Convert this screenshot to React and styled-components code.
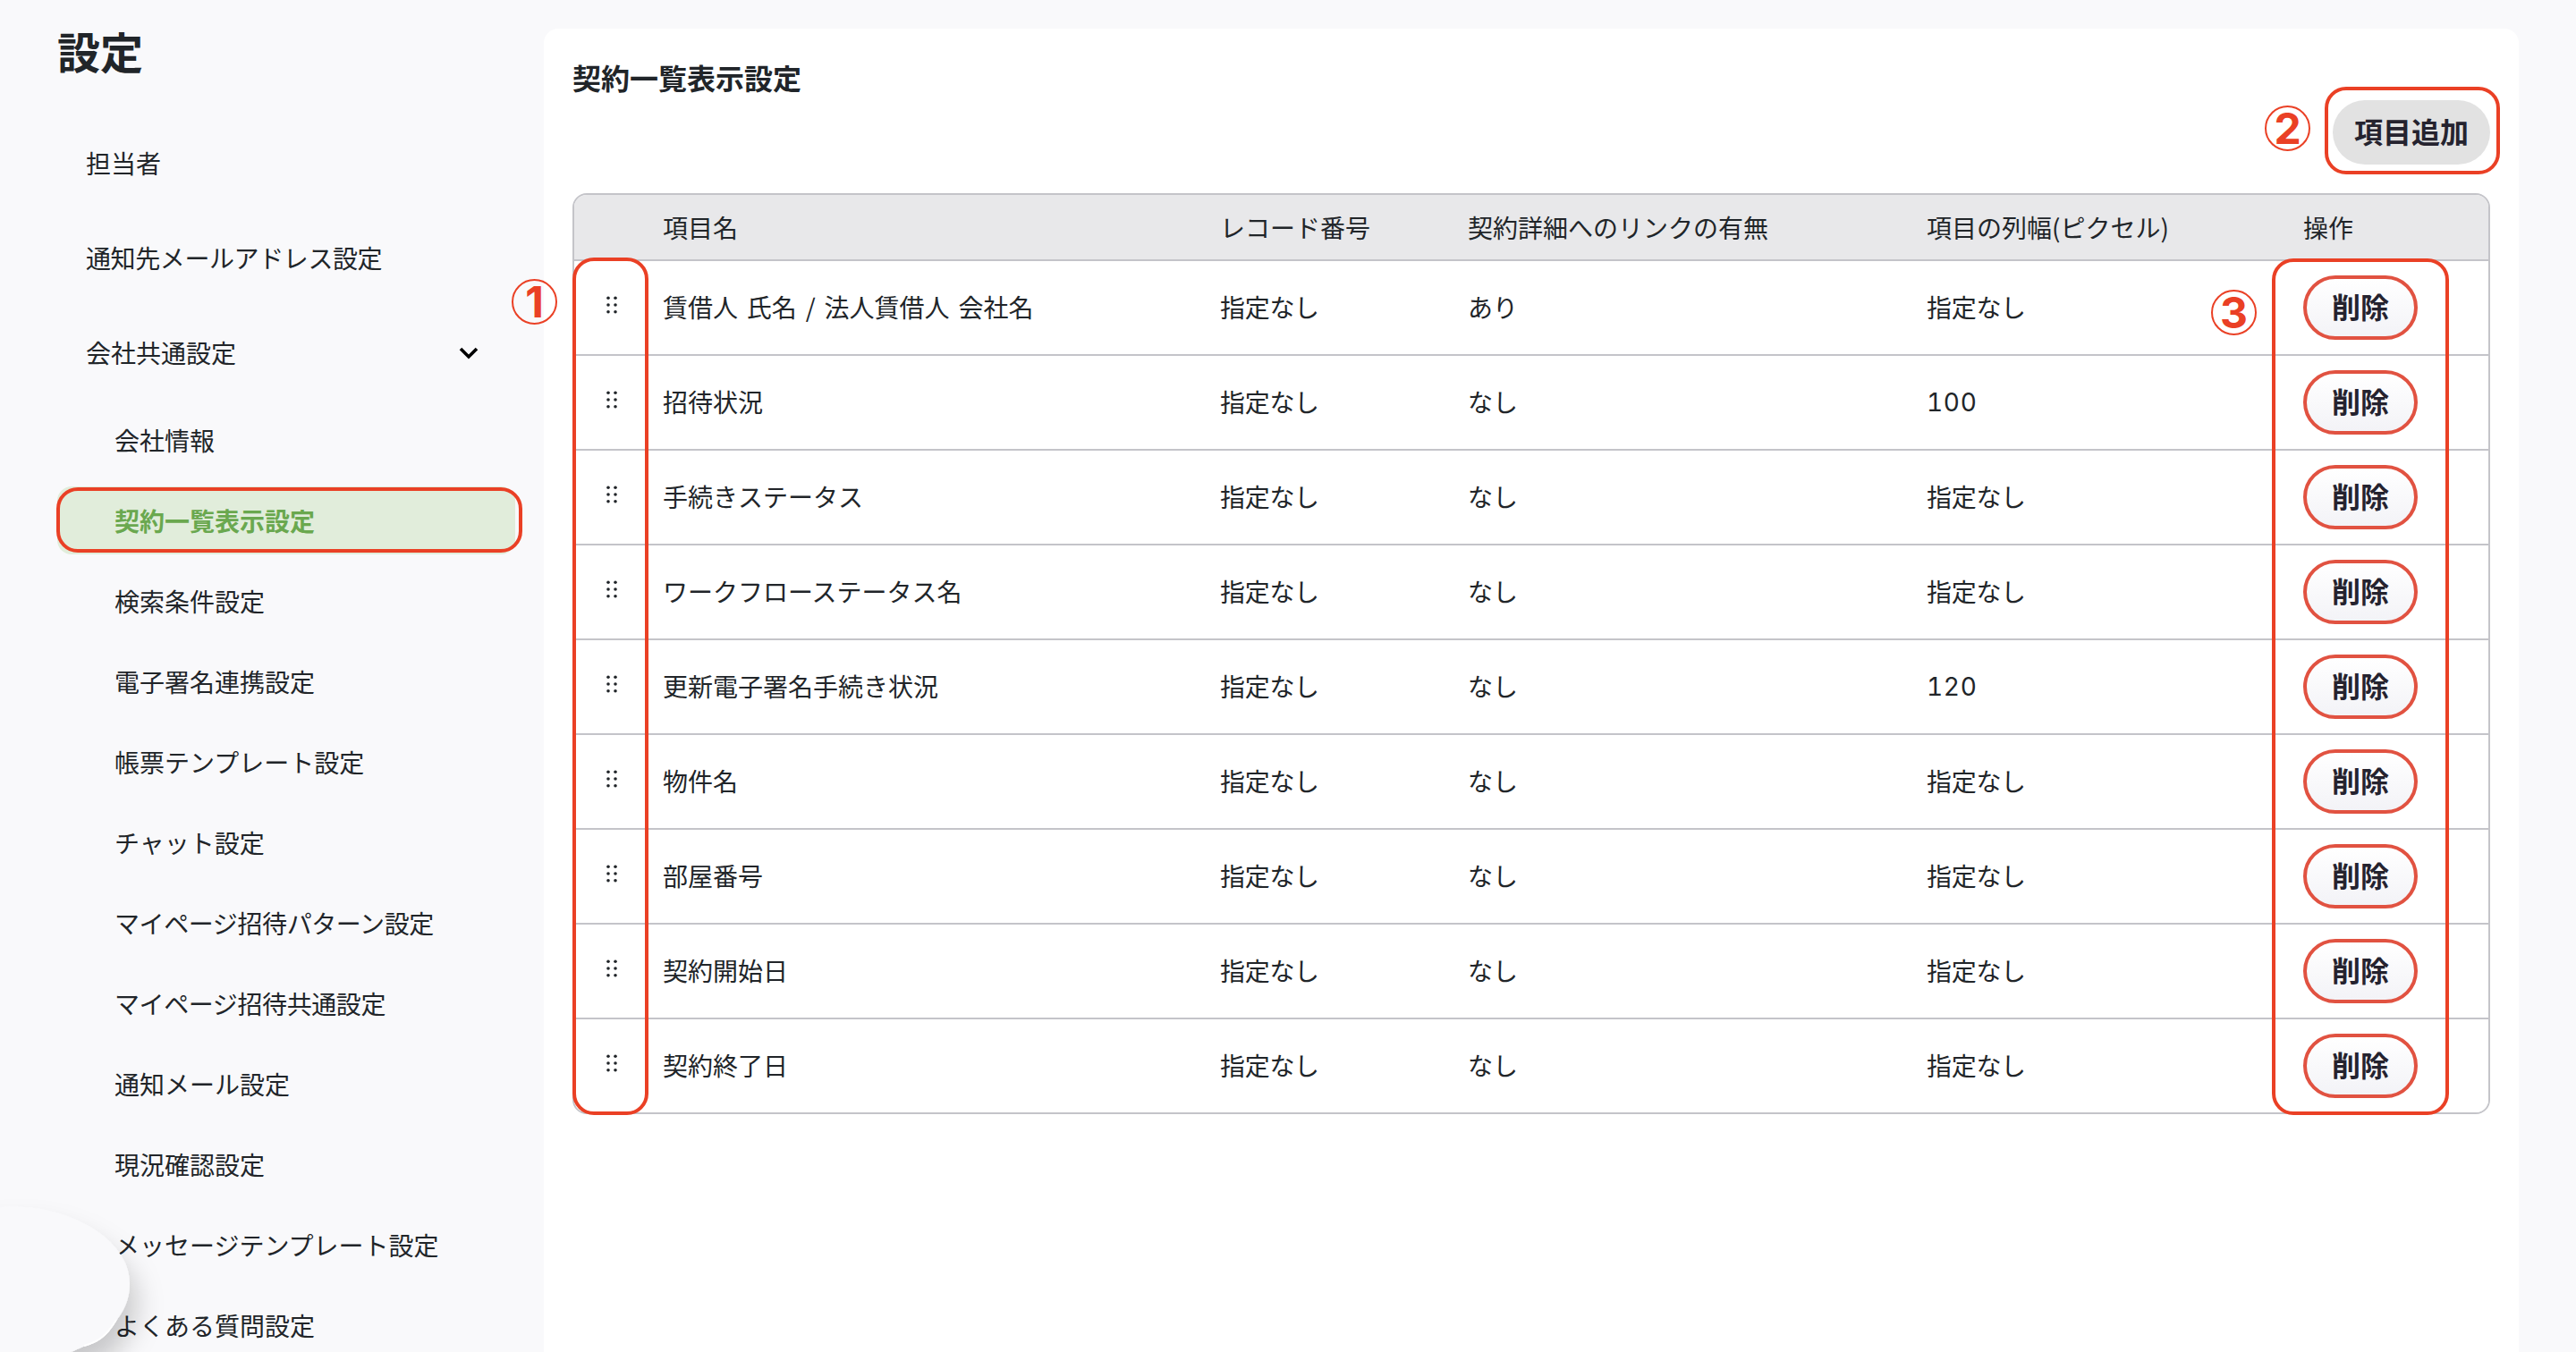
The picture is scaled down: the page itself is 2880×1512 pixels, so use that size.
import React from 'react';
import styled, { createGlobalStyle, css } from 'styled-components';

const GlobalStyle = createGlobalStyle`
  * {
    box-sizing: border-box;
  }

  body {
    background: #f9f9fb;
    color: #212529;
    font-family: 'Noto Sans CJK JP', sans-serif;
    font-size: 28px;
    margin: 0;
    overflow: hidden;
  }
`;

const Page = styled.div`
  display: flex;
  height: 1512px;
  overflow: hidden;
  position: relative;
  width: 2880px;
`;

const Sidebar = styled.aside`
  flex: none;
  padding: 20px 32px 0 64px;
  width: 608px;
`;

const SidebarTitle = styled.h1`
  font-size: 48px;
  line-height: 72px;
  margin: 0 0 38px;
`;

const MenuItem = styled.div`
  align-items: center;
  display: flex;
  height: 106px;
  justify-content: space-between;
  padding: 0 40px 2px 32px;
`;

const MenuLabel = styled.span`
  letter-spacing: ${props => (props.$tight ? '-0.4px' : 'normal')};
`;

const SubMenu = styled.div`
  display: flex;
  flex-direction: column;
  gap: 14px;
  padding-top: 6px;
`;

const SubMenuItem = styled.div`
  border-radius: 16px;
  flex: none;
  height: 76px;
  line-height: 76px;
  padding-left: 64px;
  position: relative;
  white-space: nowrap;

  ${props => props.$active && css`
    background: #e1eddb;
    color: #6aa84f;
    font-weight: bold;
  `}
`;

const Panel = styled.main`
  background: #fff;
  border-radius: 16px 16px 0 0;
  height: 1480px;
  margin-top: 32px;
  padding: 30px 32px 0;
  width: 2208px;
`;

const PanelTitle = styled.h2`
  font-size: 32px;
  line-height: 48px;
  margin: 0 0 2px;
`;

const Toolbar = styled.div`
  display: flex;
  justify-content: flex-end;
  margin-bottom: 32px;
`;

const AddButton = styled.button`
  background: #e2e2e2;
  border: 0;
  border-radius: 36px;
  color: #25232f;
  font-family: inherit;
  font-size: 32px;
  font-weight: bold;
  height: 72px;
  padding: 0 0 4px;
  position: relative;
  width: 176px;
`;

const TableFrame = styled.div`
  border: 2px solid #c4c4c9;
  border-radius: 16px;
  position: relative;
`;

const Table = styled.div`
  border-radius: 14px;
  overflow: hidden;
`;

const Row = styled.div`
  align-items: center;
  background: #fff;
  border-bottom: 2px solid #c4c4c9;
  display: grid;
  grid-template-columns: 99px 623px 277px 513px 421px 1fr;
  height: 106px;

  &:last-child {
    border-bottom: 0;
    height: 104px;
  }
`;

const HeadRow = styled(Row)`
  background: #e8e8ea;
  height: 74px;
`;

const Cell = styled.div`
  letter-spacing: ${props => (props.$tight ? '-0.3px' : 'normal')};
  padding-bottom: 2px;
  white-space: nowrap;
  word-spacing: 3.6px;
`;

const HeadCell = styled(Cell)`
  padding-bottom: 0;
`;

const NumberCell = styled(Cell)`
  font-family: Inter, 'Noto Sans CJK JP', sans-serif;
  font-variant-numeric: tabular-nums;
  letter-spacing: 0.7px;
  padding-bottom: 0;
`;

const Grip = styled.svg`
  display: block;
  margin: 0 0 6px 36px;
`;

const DeleteButton = styled.button`
  background: linear-gradient(#fff, #f3f3f7);
  border: 4px solid #e15241;
  border-radius: 36px;
  color: #25232f;
  display: block;
  font-family: inherit;
  font-size: 32px;
  font-weight: bold;
  height: 72px;
  padding: 0 0 4px;
  width: 128px;
`;

const Outline = styled.span`
  border: 4px solid #ea4025;
  border-radius: 24px;
  height: ${props => props.$height}px;
  left: ${props => props.$left}px;
  pointer-events: none;
  position: absolute;
  top: ${props => props.$top}px;
  width: ${props => props.$width}px;
`;

const Marker = styled.span`
  align-items: center;
  border: 2px solid #ea4025;
  border-radius: 50%;
  color: #ea4025;
  display: flex;
  font-family: Inter, sans-serif;
  font-size: 48px;
  font-weight: bold;
  height: 51px;
  justify-content: center;
  left: ${props => props.$left}px;
  line-height: 1;
  position: absolute;
  top: ${props => props.$top}px;
  width: 51px;
`;

const Bubble = styled.svg`
  bottom: 0;
  left: 0;
  position: absolute;
`;

const subItems = [
  { label: '会社情報' },
  { label: '契約一覧表示設定', active: true },
  { label: '検索条件設定' },
  { label: '電子署名連携設定' },
  { label: '帳票テンプレート設定' },
  { label: 'チャット設定' },
  { label: 'マイページ招待パターン設定', tight: true },
  { label: 'マイページ招待共通設定', tight: true },
  { label: '通知メール設定' },
  { label: '現況確認設定' },
  { label: 'メッセージテンプレート設定' },
  { label: 'よくある質問設定' },
];

const rows = [
  { name: '賃借人 氏名 / 法人賃借人 会社名', link: 'あり' },
  { name: '招待状況', link: 'なし', width: 100 },
  { name: '手続きステータス', link: 'なし' },
  { name: 'ワークフローステータス名', link: 'なし' },
  { name: '更新電子署名手続き状況', link: 'なし', width: 120 },
  { name: '物件名', link: 'なし' },
  { name: '部屋番号', link: 'なし' },
  { name: '契約開始日', link: 'なし' },
  { name: '契約終了日', link: 'なし' },
];

const Chevron = () => (
  <svg width="24" height="18" viewBox="0 0 24 18" fill="none">
    <path d="M3 5l9 9 9-9" stroke="#000" strokeWidth="3.6" />
  </svg>
);

const GripIcon = () => (
  <Grip width="14" height="20" viewBox="0 0 14 20" fill="#212529">
    {[2.3, 10, 17.7].map(y => (
      <React.Fragment key={y}>
        <circle cx="2" cy={y} r="1.8" />
        <circle cx="10" cy={y} r="1.8" />
      </React.Fragment>
    ))}
  </Grip>
);

const TableRow = ({ name, link, width }) => (
  <Row>
    <GripIcon />
    <Cell>{name}</Cell>
    <Cell $tight>指定なし</Cell>
    <Cell>{link}</Cell>
    {width ? <NumberCell>{width}</NumberCell> : <Cell $tight>指定なし</Cell>}
    <DeleteButton>削除</DeleteButton>
  </Row>
);

const ChatBubble = () => (
  <Bubble width="240" height="202" viewBox="0 0 240 202">
    <defs>
      <filter id="bubble-shadow" x="-50%" y="-50%" width="200%" height="200%">
        <feDropShadow dx="8" dy="22" stdDeviation="15" floodColor="#000" floodOpacity="0.2" />
      </filter>
    </defs>
    <path
      d="M-60 60C-30 40 10 36 45 42C100 52 145 85 145 125C145 145 138 156 128 170C118 186 108 192 93 196C84 200 78 203 66 206L-60 240Z"
      fill="#f9f9fb"
      filter="url(#bubble-shadow)"
    />
    <path d="M130 166C118 186 108 191 94 195" fill="none" stroke="#fff" strokeWidth="2" />
  </Bubble>
);

const App = () => (
  <Page>
    <GlobalStyle />
    <Sidebar>
      <SidebarTitle>設定</SidebarTitle>
      <MenuItem>担当者</MenuItem>
      <MenuItem>
        <MenuLabel $tight>通知先メールアドレス設定</MenuLabel>
      </MenuItem>
      <MenuItem>
        <MenuLabel>会社共通設定</MenuLabel>
        <Chevron />
      </MenuItem>
      <SubMenu>
        {subItems.map(({ label, active, tight }) => (
          <SubMenuItem key={label} $active={active}>
            <MenuLabel $tight={tight}>{label}</MenuLabel>
            {active && <Outline $left={-1} $top={1} $width={521} $height={73} />}
          </SubMenuItem>
        ))}
      </SubMenu>
    </Sidebar>
    <Panel>
      <PanelTitle>契約一覧表示設定</PanelTitle>
      <Toolbar>
        <AddButton>
          項目追加
          <Outline $left={-9} $top={-15} $width={196} $height={98} />
        </AddButton>
      </Toolbar>
      <TableFrame>
        <Table>
          <HeadRow>
            <HeadCell />
            <HeadCell>項目名</HeadCell>
            <HeadCell>レコード番号</HeadCell>
            <HeadCell>契約詳細へのリンクの有無</HeadCell>
            <HeadCell>項目の列幅(ピクセル)</HeadCell>
            <HeadCell>操作</HeadCell>
          </HeadRow>
          {rows.map(row => <TableRow key={row.name} {...row} />)}
        </Table>
        <Outline $left={-2} $top={70} $width={85} $height={959} />
        <Outline $left={1898} $top={71} $width={198} $height={958} />
      </TableFrame>
    </Panel>
    <Marker $left={572} $top={312}>1</Marker>
    <Marker $left={2532} $top={118}>2</Marker>
    <Marker $left={2472} $top={324}>3</Marker>
    <ChatBubble />
  </Page>
);

export default App;
